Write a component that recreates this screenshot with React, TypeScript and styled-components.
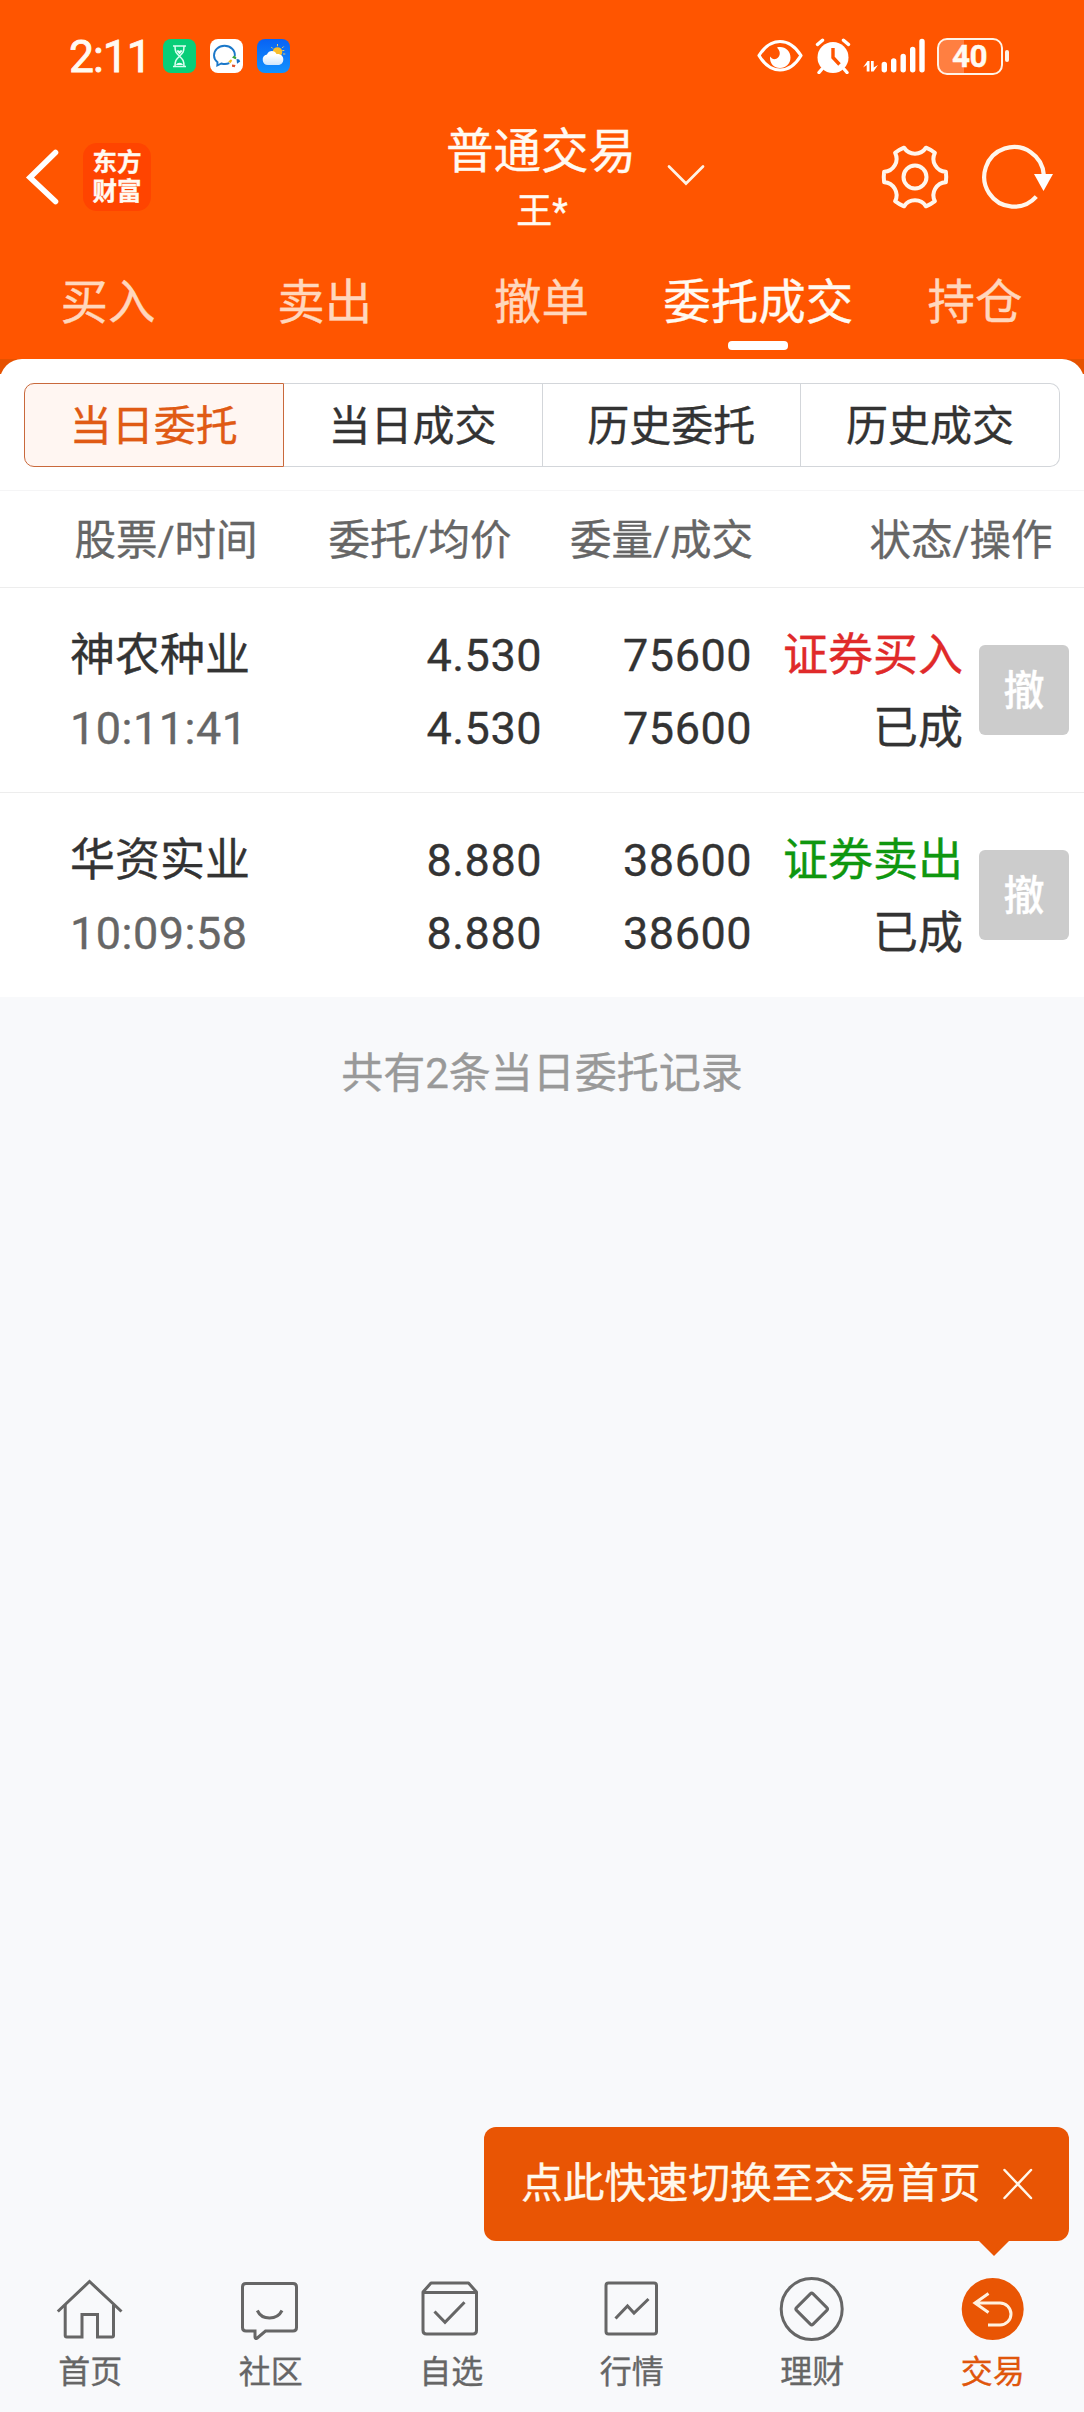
import React from "react";
import styled, { createGlobalStyle } from "styled-components";

const GlobalStyle = createGlobalStyle`
  * { box-sizing: border-box; }
  body {
    margin: 0;
    background: #f8f9fb;
    font-family: Roboto, "Noto Sans CJK SC", sans-serif;
    -webkit-text-stroke: 0.35px currentColor;
    color: #333;
  }
  svg { display: block; flex: none; }
`;

const Page = styled.div`
  width: 1084px;
  height: 2412px;
  display: flex;
  flex-direction: column;
  overflow: hidden;
`;

/* ---------- orange top area ---------- */

const Top = styled.header`
  background: #ff5500;
  color: #fffaf2;
  height: 359px;
  display: flex;
  flex-direction: column;
`;

const StatusBar = styled.div`
  height: 112px;
  display: flex;
  align-items: center;
  padding: 0 75px 0 69px;
`;

const Clock = styled.div`
  width: 94px;
  font-size: 44.5px;
  line-height: 50px;
  padding-top: 2px;
  letter-spacing: -1px;
  font-weight: 400;
  -webkit-text-stroke: 0.8px currentColor;
`;

const AppIcons = styled.div`
  display: flex;
  gap: 14px;
`;

const SystemIcons = styled.div`
  margin-left: auto;
  display: flex;
  align-items: center;
  gap: 12px;
`;

const Battery = styled.div`
  display: flex;
  align-items: center;
  gap: 2px;
`;

const BatteryBody = styled.div`
  width: 66px;
  height: 37px;
  border: 2.6px solid #fff3e6;
  border-radius: 10px;
  background: linear-gradient(90deg, #ff7f41 0 25px, transparent 25px);
  font-size: 31.5px;
  line-height: 33px;
  font-weight: 700;
  text-align: center;
  letter-spacing: -0.6px;
`;

const BatteryNub = styled.div`
  width: 4.5px;
  height: 12px;
  border-radius: 2px;
  background: #fff3e6;
`;

const TitleBar = styled.div`
  height: 128px;
  display: grid;
  grid-template-columns: 1fr auto 1fr;
  align-items: start;
`;

const TitleSide = styled.div<{ $end?: boolean }>`
  height: 130px;
  display: flex;
  align-items: center;
  justify-content: ${(p) => (p.$end ? "flex-end" : "flex-start")};
`;

const Logo = styled.div`
  width: 68px;
  height: 68px;
  margin-left: 22px;
  border-radius: 14px;
  background: #ff4400;
  padding-top: 5px;
  font-weight: 700;
  font-size: 24.5px;
  line-height: 29px;
  text-align: center;
`;

const Title = styled.div`
  text-align: center;
  padding-top: 10px;
`;

const TitleMain = styled.div`
  font-size: 47.5px;
  line-height: 60px;
  margin-left: -2px;
`;

const TitleSub = styled.div`
  font-size: 36px;
  line-height: 60px;
`;

const Tabs = styled.nav`
  flex: 1;
  display: grid;
  grid-template-columns: repeat(5, 216.8px);
`;

const Tab = styled.div<{ $active?: boolean }>`
  display: flex;
  flex-direction: column;
  align-items: center;
  font-size: 47.5px;
  line-height: 70px;
  padding-top: 28px;
  margin-left: -1px;
  white-space: nowrap;
  color: ${(p) => (p.$active ? "#fffaf2" : "#ffd7bd")};
`;

const TabMark = styled.div`
  width: 60px;
  height: 9px;
  margin-top: 3px;
  border-radius: 4px;
  background: #fff;
`;

/* ---------- white sheet ---------- */

const SheetCap = styled.div`
  height: 15px;
  background: #e65200;
  overflow: hidden;
`;

const SheetCapInner = styled.div`
  height: 24px;
  background: #fff;
  border-radius: 22px 22px 0 0;
`;

const Sheet = styled.main`
  background: #fff;
`;

const Segments = styled.div`
  display: flex;
  padding: 9px 24px 23px;
  border-bottom: 1px solid #f5f5f6;
`;

const Segment = styled.div<{ $active?: boolean }>`
  flex: 1;
  height: 84px;
  border: 1px solid ${(p) => (p.$active ? "#c9693c" : "#d3d6da")};
  border-left-width: ${(p) => (p.$active ? "1px" : "0")};
  background: ${(p) => (p.$active ? "#fff6f2" : "#fff")};
  color: ${(p) => (p.$active ? "#e05a14" : "#333")};
  font-size: 42px;
  line-height: 86px;
  text-align: center;
  &:first-child { border-radius: 10px 0 0 10px; }
  &:last-child { border-radius: 0 10px 10px 0; }
`;

const ColumnHeads = styled.div`
  height: 97px;
  display: grid;
  grid-template-columns: 257.5px 254px 241.5px 299.5px;
  border-bottom: 1px solid #ededed;
  font-size: 41.5px;
  line-height: 100px;
  color: #666;
  text-align: right;
`;

const Order = styled.div`
  height: 205px;
  display: grid;
  grid-template-columns: 240px 232px 210px 211px 90px;
  padding-left: 70px;
  border-bottom: 1px solid #ededed;
  white-space: nowrap;
  &:last-child { border-bottom: 0; height: 204px; }
`;

const Cell = styled.div<{ $left?: boolean }>`
  padding-top: 31px;
  font-size: 45px;
  line-height: 73px;
  text-align: ${(p) => (p.$left ? "left" : "right")};
`;

const Digits = styled.div<{ $muted?: boolean }>`
  letter-spacing: 0.5px;
  color: ${(p) => (p.$muted ? "#666" : "#333")};
`;

const Side = styled.div<{ $buy: boolean }>`
  color: ${(p) => (p.$buy ? "#e02a2a" : "#0f970f")};
`;

const CancelButton = styled.button`
  width: 90px;
  height: 90px;
  margin: 57px 0 0 16px;
  padding: 0;
  border: 0;
  border-radius: 6px;
  background: #ccc;
  color: #fff;
  font: 500 41px/92px Roboto, "Noto Sans CJK SC", sans-serif;
`;

const Summary = styled.div`
  padding-top: 46px;
  text-align: center;
  font-size: 42px;
  line-height: 62px;
  color: #999;
`;

/* ---------- bottom navigation ---------- */

const BottomNav = styled.nav`
  position: relative;
  margin-top: auto;
  height: 138px;
  display: grid;
  grid-template-columns: repeat(6, 180.5px);
`;

const NavItem = styled.div<{ $active?: boolean }>`
  display: flex;
  flex-direction: column;
  align-items: center;
  font-size: 32px;
  line-height: 57px;
  color: ${(p) => (p.$active ? "#e0560c" : "#666")};
`;

const Tip = styled.div`
  position: absolute;
  right: 15px;
  bottom: 171px;
  width: 585px;
  height: 114px;
  padding-left: 37px;
  display: flex;
  align-items: center;
  gap: 22px;
  border-radius: 12px;
  background: #e95504;
  color: #fff8ec;
  font-size: 41.8px;
  line-height: 60px;
  white-space: nowrap;
  &::after {
    content: "";
    position: absolute;
    right: 60px;
    top: 100%;
    border: 15px solid transparent;
    border-top-color: #e95504;
    border-bottom: 0;
  }
`;

/* ---------- icons ---------- */

const HourglassIcon = () => (
  <svg width="33" height="34" viewBox="0 0 33 34">
    <rect width="33" height="34" rx="8" fill="#08ce78" />
    <g fill="none" stroke="#d9fff0" strokeWidth="1.5">
      <path d="M10 7h13M10 27.500h13M12 7c0 6 1 7 4.500 10.200C20 14 21 13 21 7M12 27.500c0-6 1-7 4.500-10.300C20 20.500 21 21.500 21 27.500" />
    </g>
    <path d="M13.500 12l1.500-1 1.500 1 1.500-1 1.500 1-3 3.500zM13 26c1-3 6-3 7 0z" fill="#eafff6" />
  </svg>
);

const ChatIcon = () => (
  <svg width="33" height="34" viewBox="0 0 33 34">
    <rect width="33" height="34" rx="8" fill="#fff" />
    <path d="M24.800 17.500C25.500 11 20.500 6.800 14.500 6.800S4 11 4 16.500c0 3 1.500 5 3.500 6.700L7.300 26.500l4-2c2.800.8 5.500.7 8-.3" fill="none" stroke="#1b78c9" strokeWidth="1.900" />
    <path d="M22 18.500l2.200-2 2.300 2.300-1 1.500z" fill="#3aa53a" />
    <path d="M26.500 20l2.700.5 1 2-3.200 2.200z" fill="#1570c4" />
    <path d="M22 25.500l3.500.5-.8 2.300-2.700-.6z" fill="#e0522a" />
    <path d="M18.300 22.500l2.700-2.200 1.200 1.500-1.800 2.400z" fill="#f0b91c" />
  </svg>
);

const WeatherIcon = () => (
  <svg width="33" height="34" viewBox="0 0 33 34">
    <defs>
      <linearGradient id="sky" x1="0" y1="0" x2="0" y2="1">
        <stop offset="0" stopColor="#0862f4" />
        <stop offset="1" stopColor="#1192ff" />
      </linearGradient>
      <linearGradient id="cloud" x1="0" y1="0" x2="0" y2="1">
        <stop offset="0.300" stopColor="#fff" />
        <stop offset="1" stopColor="#cfe6fb" />
      </linearGradient>
    </defs>
    <rect width="33" height="34" rx="8" fill="url(#sky)" />
    <circle cx="20.500" cy="13" r="4.800" fill="#f7bd2d" />
    <path d="M20.500 5v2.200M14.300 8l1.400 1.500M26.700 7.500l-1.500 1.500M26 15h2.300M25.300 11.500h2" stroke="#e6c964" strokeWidth="1" />
    <path d="M11 26a5.300 5.300 0 0 1-1-10.500c1.500-4.500 8-4.500 9.500-.5 4-.5 7 2 6.800 5.500 0 3-2 5.500-5.300 5.500z" fill="url(#cloud)" />
  </svg>
);

const EyeIcon = () => (
  <svg width="46" height="34" viewBox="0 0 46 34">
    <path d="M2 16.500C8 7 15 2.500 23 2.500s15 4.500 21 14C38 26.500 31 31 23 31S8 26.500 2 16.500z" fill="none" stroke="#fff" strokeWidth="3.200" strokeLinejoin="round" />
    <path d="M20 8.500c7-2 13.500 3 13.500 10 0 6-4.500 10.500-10.500 10.500s-10.500-4.500-10-11.500c1.500 2 3.500 3 5.500 2.500 4-1 6.500-6.500 1.500-11.500z" fill="#fff" />
  </svg>
);

const AlarmIcon = () => (
  <svg width="36" height="36" viewBox="0 0 36 36">
    <circle cx="18" cy="19.500" r="15.500" fill="#fff" />
    <path d="M18 10v9.500l6.500 7" fill="none" stroke="#ff5500" strokeWidth="3.400" />
    <path d="M2.500 6.500l5-4.300M33.500 6.500l-5-4.300M7 31l-3 3.500M29 31l3 3.500" stroke="#fff" strokeWidth="3.400" strokeLinecap="round" />
  </svg>
);

const SignalIcon = () => (
  <svg width="62" height="36" viewBox="0 0 62 36">
    <path d="M0 29.500L4.500 23h2v10.500H3.700v-6.500L0 29.500zM15 27l-4.500 6.500H8V23h2.700v6.500L15 27z" fill="#fff" />
    <g stroke="#fff" strokeWidth="5.400" strokeLinecap="round">
      <path d="M21.300 26.500v5.200M30.700 23v8.700M40.200 18.500v13.200M49.700 11.500v20.200M59 3.500v28.200" />
    </g>
  </svg>
);

const BackIcon = () => (
  <svg width="61" height="56" viewBox="-26 0 61 56">
    <path d="M29.500 3.500L4 28.500l25.500 24" fill="none" stroke="#fff" strokeWidth="5.600" strokeLinecap="round" />
  </svg>
);

const ChevronIcon = () => (
  <svg width="38" height="22" viewBox="0 0 38 22">
    <path d="M2 2.500L19 19.500l17-17" fill="none" stroke="#fff3e6" strokeWidth="2.700" strokeLinecap="round" />
  </svg>
);

// Six-toothed cog: short flat teeth joined by concave arcs.
const polar = (r: number, deg: number) => {
  const a = (deg * Math.PI) / 180;
  return `${(35 + r * Math.cos(a)).toFixed(2)} ${(35 + r * Math.sin(a)).toFixed(2)}`;
};
const cogPath =
  "M" +
  [0, 60, 120, 180, 240, 300]
    .map((t) => `${polar(31.3, t - 9.5)}Q${polar(31.6, t)} ${polar(31.3, t + 9.5)}A13 13 0 0 0 ${polar(31.3, t + 50.5)}`)
    .join("L") +
  "Z";

const GearIcon = () => (
  <svg width="70" height="70" viewBox="0 0 70 70">
    <g fill="none" stroke="#fff6ec" strokeWidth="4" strokeLinejoin="round">
      <path d={cogPath} />
      <circle cx="35" cy="35" r="11.500" />
    </g>
  </svg>
);

const RefreshIcon = () => (
  <svg width="74" height="70" viewBox="0 0 74 70">
    <path d="M56.300 54.700A29.800 29.800 0 1 1 63.800 33" fill="none" stroke="#fff6ec" strokeWidth="4.200" />
    <path d="M54 32h19l-9.500 17z" fill="#fff" />
  </svg>
);

const CloseIcon = () => (
  <svg width="30" height="32" viewBox="0 0 30 32">
    <path d="M1.500 2l26.500 28M28 2L1.500 30" stroke="#fff8ec" strokeWidth="2.500" strokeLinecap="round" />
  </svg>
);

const NavIcon = ({ children }: { children: React.ReactNode }) => (
  <svg width="70" height="70" viewBox="0 0 70 70" fill="none" stroke="#666" strokeWidth="3">
    {children}
  </svg>
);

const navItems = [
  {
    label: "首页",
    icon: (
      <>
        <path d="M2.800 37.500L34.500 7.500l32 30" />
        <path d="M10.200 31v30.500q0 1.500 1.500 1.500H27V40.500h15.500V63H57q1.500 0 1.500-1.500V31" />
      </>
    ),
  },
  {
    label: "社区",
    icon: (
      <>
        <path d="M10 9.500h47q3.500 0 3.500 3.500v40.500q0 3.500-3.500 3.500H29.500l-8.500 7.200q-1.800 1-2-1V57H10q-3.500 0-3.500-3.500V13q0-3.500 3.500-3.500z" />
        <path d="M21.300 36.500C26 46.500 41 46.500 46 36.500" />
      </>
    ),
  },
  {
    label: "自选",
    icon: (
      <>
        <path d="M7 18l8-9h37.500l8 9v38.500q0 3.500-3.500 3.500H10.500Q7 60 7 56.500zM7 18.500h53.500" strokeLinejoin="round" />
        <path d="M18.500 37.500L29 48.300l19.500-20" />
      </>
    ),
  },
  {
    label: "行情",
    icon: (
      <>
        <rect x="9" y="9" width="50.500" height="51" rx="2.500" />
        <path d="M18.500 44.500l12-12.500 6.500 7L51.500 25" />
      </>
    ),
  },
  {
    label: "理财",
    icon: (
      <>
        <circle cx="34.700" cy="35" r="30.500" />
        <rect x="23" y="23.300" width="23.400" height="23.400" rx="2" transform="rotate(45 34.700 35)" />
      </>
    ),
  },
  {
    label: "交易",
    active: true,
    icon: (
      <>
        <circle cx="34.700" cy="35" r="31" fill="#e95504" stroke="none" />
        <path d="M30.500 19.500L17 29l13.500 9.500M17 29h25a11 11 0 0 1 0 22H30" stroke="#fff1e0" />
      </>
    ),
  },
];

const tabs = ["买入", "卖出", "撤单", "委托成交", "持仓"];
const segments = ["当日委托", "当日成交", "历史委托", "历史成交"];
const heads = ["股票/时间", "委托/均价", "委量/成交", "状态/操作"];
const orders = [
  { name: "神农种业", time: "10:11:41", price: "4.530", avg: "4.530", qty: "75600", filled: "75600", buy: true },
  { name: "华资实业", time: "10:09:58", price: "8.880", avg: "8.880", qty: "38600", filled: "38600", buy: false },
];

const ChevronSlot = styled.div`
  margin: 0 auto 4px 31px;
`;

const RightIcons = styled.div`
  display: flex;
  gap: 30px;
  margin-right: 30px;
`;

export default function App() {
  return (
    <Page>
      <GlobalStyle />
      <Top>
        <StatusBar>
          <Clock>2:11</Clock>
          <AppIcons>
            <HourglassIcon />
            <ChatIcon />
            <WeatherIcon />
          </AppIcons>
          <SystemIcons>
            <EyeIcon />
            <AlarmIcon />
            <SignalIcon />
            <Battery>
              <BatteryBody>40</BatteryBody>
              <BatteryNub />
            </Battery>
          </SystemIcons>
        </StatusBar>
        <TitleBar>
          <TitleSide>
            <BackIcon />
            <Logo>
              <div>东方</div>
              <div>财富</div>
            </Logo>
          </TitleSide>
          <Title>
            <TitleMain>普通交易</TitleMain>
            <TitleSub>王*</TitleSub>
          </Title>
          <TitleSide $end>
            <ChevronSlot>
              <ChevronIcon />
            </ChevronSlot>
            <RightIcons>
              <GearIcon />
              <RefreshIcon />
            </RightIcons>
          </TitleSide>
        </TitleBar>
        <Tabs>
          {tabs.map((t, i) => (
            <Tab key={t} $active={i === 3}>
              {t}
              {i === 3 && <TabMark />}
            </Tab>
          ))}
        </Tabs>
      </Top>
      <SheetCap>
        <SheetCapInner />
      </SheetCap>
      <Sheet>
        <Segments>
          {segments.map((s, i) => (
            <Segment key={s} $active={i === 0}>
              {s}
            </Segment>
          ))}
        </Segments>
        <ColumnHeads>
          {heads.map((h) => (
            <div key={h}>{h}</div>
          ))}
        </ColumnHeads>
        <div>
          {orders.map((o) => (
            <Order key={o.name}>
              <Cell $left>
                <div>{o.name}</div>
                <Digits $muted>{o.time}</Digits>
              </Cell>
              <Cell>
                <Digits>{o.price}</Digits>
                <Digits>{o.avg}</Digits>
              </Cell>
              <Cell>
                <Digits>{o.qty}</Digits>
                <Digits>{o.filled}</Digits>
              </Cell>
              <Cell>
                <Side $buy={o.buy}>{o.buy ? "证券买入" : "证券卖出"}</Side>
                <div>已成</div>
              </Cell>
              <CancelButton>撤</CancelButton>
            </Order>
          ))}
        </div>
      </Sheet>
      <Summary>共有2条当日委托记录</Summary>
      <BottomNav>
        <Tip>
          点此快速切换至交易首页
          <CloseIcon />
        </Tip>
        {navItems.map((n) => (
          <NavItem key={n.label} $active={n.active}>
            <NavIcon>{n.icon}</NavIcon>
            {n.label}
          </NavItem>
        ))}
      </BottomNav>
    </Page>
  );
}
